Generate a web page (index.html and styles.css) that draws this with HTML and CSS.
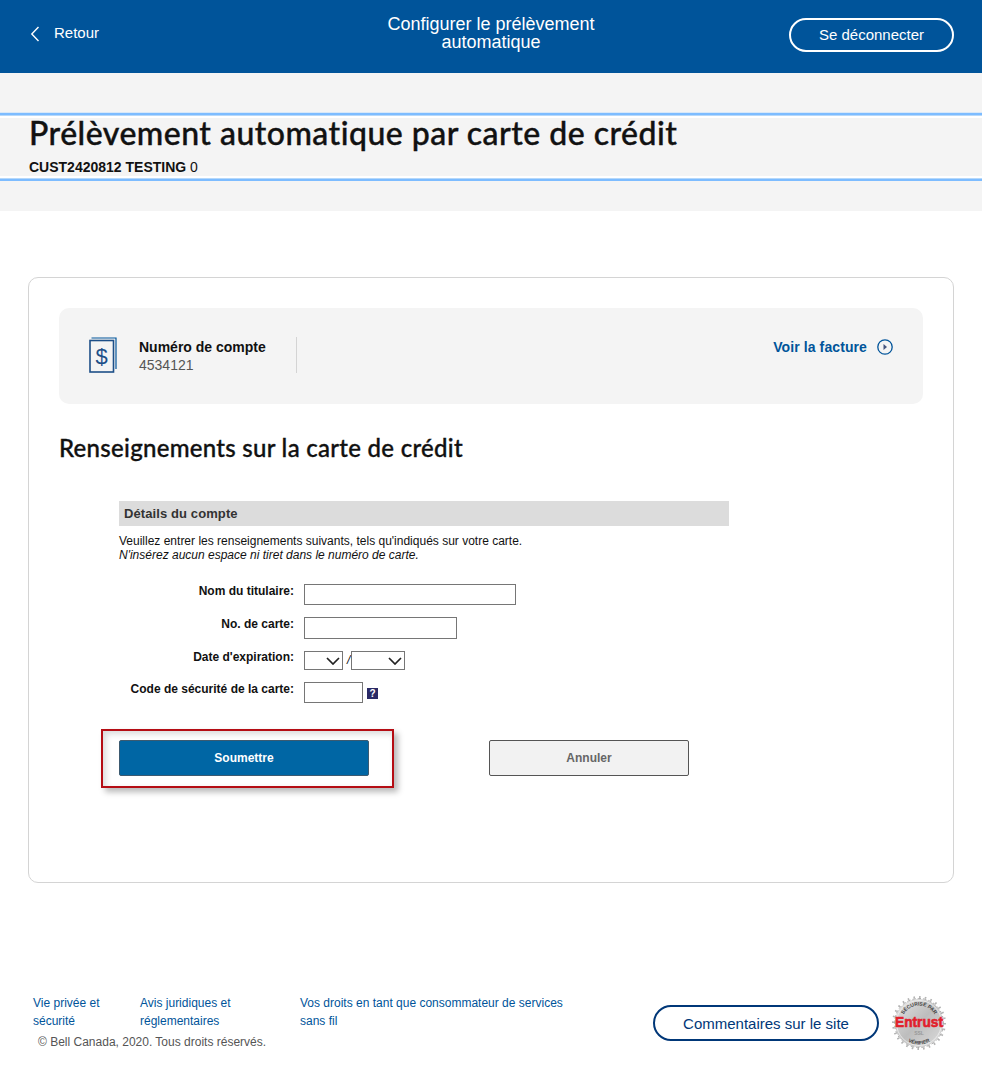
FILE: index.html
```html
<!DOCTYPE html>
<html lang="fr">
<head>
    <meta charset="UTF-8">
    <meta name="viewport" content="width=device-width, initial-scale=1.0">
    <title>Configurer le prélèvement automatique</title>
    <link rel="stylesheet" href="styles.css">
</head>
<body>
    <header class="topbar">
        <a class="back">
            <svg class="back-icon" width="10" height="16" viewBox="0 0 10 16"><path d="M8.5 1 L1.8 8 L8.5 15" fill="none" stroke="#fff" stroke-width="1.4"/></svg>
            Retour
        </a>
        <div class="topbar-title">Configurer le prélèvement<br>automatique</div>
        <button class="logout">Se déconnecter</button>
    </header>

    <div class="band">
        <div class="band-box">
            <h1>Prélèvement automatique par carte de crédit</h1>
            <div class="customer"><b>CUST2420812 TESTING</b> 0</div>
        </div>
    </div>

    <main class="card">
        <div class="account">
            <svg class="bill-icon" width="28" height="36" viewBox="0 0 28 36">
                <path d="M2.5 1 H27 V32" fill="none" stroke="#00549a" stroke-width="1.2"/>
                <rect x="1" y="3.5" width="23.5" height="31.5" fill="none" stroke="#1d4f88" stroke-width="1.6"/>
                <text x="12.7" y="27" class="bill-sign">$</text>
            </svg>
            <div class="account-info">
                <div class="account-label">Numéro de compte</div>
                <div class="account-number">4534121</div>
            </div>
            <a class="invoice">
                Voir la facture
                <svg width="16" height="16" viewBox="0 0 16 16"><circle cx="8" cy="8" r="7.2" fill="none" stroke="#00549a" stroke-width="1.3"/><path d="M6.5 5 L10 8 L6.5 11 Z" fill="#44557f"/></svg>
            </a>
        </div>

        <h2>Renseignements sur la carte de crédit</h2>

        <section class="form">
            <div class="form-head">Détails du compte</div>
            <p class="form-note">Veuillez entrer les renseignements suivants, tels qu'indiqués sur votre carte.<br><i>N'insérez aucun espace ni tiret dans le numéro de carte.</i></p>

            <div class="fields">
                <label>Nom du titulaire:</label>
                <div class="field"><input class="input-name" type="text"></div>
                <label>No. de carte:</label>
                <div class="field"><input class="input-card" type="text"></div>
                <label class="label-date">Date d'expiration:</label>
                <div class="field">
                    <select class="select-month"><option></option></select>
                    <span class="slash">/</span>
                    <select class="select-year"><option></option></select>
                </div>
                <label>Code de sécurité de la carte:</label>
                <div class="field">
                    <input class="input-code" type="text">
                    <span class="help">?</span>
                </div>
            </div>

            <div class="actions">
                <div class="submit-wrap"><button class="btn-submit">Soumettre</button></div>
                <button class="btn-cancel">Annuler</button>
            </div>
        </section>
    </main>

    <footer class="footer">
        <div class="footer-left">
            <div class="footer-links">
                <a class="link-privacy">Vie privée et sécurité</a>
                <a class="link-legal">Avis juridiques et réglementaires</a>
                <a class="link-rights">Vos droits en tant que consommateur de services sans fil</a>
            </div>
            <div class="copyright">© Bell Canada, 2020. Tous droits réservés.</div>
        </div>
        <div class="footer-right">
            <button class="feedback">Commentaires sur le site</button>
            <svg class="seal" width="54" height="54" viewBox="0 0 54 54">
                <defs>
                    <linearGradient id="silver" x1="0" y1="0" x2="1" y2="1">
                        <stop offset="0" stop-color="#e4e4e4"/>
                        <stop offset="0.5" stop-color="#bdbdbd"/>
                        <stop offset="1" stop-color="#dcdcdc"/>
                    </linearGradient>
                    <path id="seal-top" d="M9.5 27 A17.5 17.5 0 0 1 44.5 27"/>
                    <path id="seal-bottom" d="M5.5 27 A21.5 21.5 0 0 0 48.5 27"/>
                </defs>
                <circle cx="27" cy="27" r="24" fill="url(#silver)"/>
                <circle cx="27" cy="27" r="24.5" fill="none" stroke="#ababab" stroke-width="1" stroke-dasharray="3.4 2"/>
                <circle cx="27" cy="27" r="26" fill="none" stroke="#b4b4b4" stroke-width="2" stroke-dasharray="1.6 4.2"/>
                <circle cx="27" cy="27" r="22.5" fill="none" stroke="#f2f2f2" stroke-width="0.8"/>
                <text class="seal-small"><textPath href="#seal-top" startOffset="50%" text-anchor="middle">SÉCURISÉ PAR</textPath></text>
                <text class="seal-small"><textPath href="#seal-bottom" startOffset="50%" text-anchor="middle">VÉRIFIER</textPath></text>
                <text x="3" y="31" class="seal-name" textLength="48" lengthAdjust="spacingAndGlyphs">Entrust</text>
                <text x="27" y="39" class="seal-ssl">SSL</text>
            </svg>
        </div>
    </footer>
</body>
</html>
```

FILE: styles.css
```css
* {
    box-sizing: border-box;
}

body {
    margin: 0;
    font-family: "Liberation Sans", Arial, sans-serif;
    background: #fff;
    color: #111;
}

/* Top bar */
.topbar {
    height: 73px;
    background: #00549a;
    color: #fff;
    display: grid;
    grid-template-columns: 1fr auto 1fr;
    align-items: start;
    padding: 0 28px;
}

.back {
    display: flex;
    align-items: center;
    gap: 14px;
    font-size: 15px;
    padding: 24px 0 0 2px;
    line-height: 18px;
}

.back-icon {
    margin-top: 2px;
}

.topbar-title {
    font-size: 18px;
    line-height: 18px;
    text-align: center;
    padding-top: 15px;
}

.logout {
    justify-self: end;
    width: 165px;
    height: 34px;
    margin-top: 18px;
    padding: 0 0 2px;
    background: transparent;
    border: 2px solid #fff;
    border-radius: 17px;
    color: #fff;
    font: 15px "Liberation Sans", Arial, sans-serif;
}

/* Title band */
.band {
    height: 138px;
    background: #f4f4f4;
    padding-top: 40px;
}

.band-box {
    height: 68px;
    padding: 0 29px;
    border-top: 2px solid #7dbcff;
    border-bottom: 2px solid #7dbcff;
    box-shadow: 0 -1px 0 #d8e8f8, inset 0 1px 0 #b5d8fb, inset 0 -1px 0 #b5d8fb, inset 0 3px 0 #fff, inset 0 -3px 0 #fff;
}

h1 {
    margin: 0;
    padding-top: 2px;
    font: 500 32px/32px Lato, sans-serif;
    letter-spacing: 0.48px;
    -webkit-text-stroke: 0.4px #111;
    color: #111;
}

.customer {
    font-size: 14px;
    line-height: 16px;
    margin-top: 10px;
    color: #111;
}

/* Main card */
.card {
    margin: 66px 28px 0;
    height: 606px;
    border: 1px solid #d4d4d4;
    border-radius: 10px;
    padding: 30px 30px 0;
}

.account {
    height: 96px;
    background: #f4f4f4;
    border-radius: 10px;
    display: flex;
    align-items: flex-start;
    padding: 29px 30px 0;
}

.bill-sign {
    font: 22px "Liberation Sans", Arial, sans-serif;
    fill: #1d4f88;
    text-anchor: middle;
}

.account-info {
    margin-left: 22px;
    width: 158px;
    height: 36px;
    border-right: 1px solid #d4d4d4;
    padding-top: 1px;
}

.account-label {
    font-size: 14px;
    font-weight: bold;
    line-height: 18px;
}

.account-number {
    font-size: 14px;
    line-height: 18px;
    color: #555;
}

.invoice {
    margin-left: auto;
    display: flex;
    align-items: center;
    gap: 10px;
    font-size: 14px;
    font-weight: bold;
    letter-spacing: 0.1px;
    color: #00549a;
    line-height: 20px;
}

h2 {
    margin: 27px 0 0;
    font: 500 24px/34px Lato, sans-serif;
    letter-spacing: 0.28px;
    -webkit-text-stroke: 0.35px #111;
    color: #111;
}

/* Form */
.form {
    margin: 36px 0 0 60px;
    font-size: 12px;
}

.form-head {
    width: 610px;
    height: 25px;
    background: #dcdcdc;
    color: #333;
    font-size: 13px;
    font-weight: bold;
    letter-spacing: 0.1px;
    line-height: 25px;
    padding-left: 5px;
}

.form-note {
    margin: 8px 0 0;
    line-height: 14px;
    color: #111;
}

.fields {
    display: grid;
    grid-template-columns: 175px auto;
    column-gap: 10px;
    margin-top: 22px;
    width: 610px;
}

.fields label {
    font-weight: bold;
    text-align: right;
    line-height: 14px;
    color: #111;
}

.fields .label-date {
    margin-top: -1px;
}

.field {
    display: flex;
    align-items: flex-start;
    margin-bottom: 12px;
}

.fields input {
    display: block;
    height: 21px;
    border: 1px solid #767676;
    background: #fff;
    padding: 0 3px;
}

/* native arrow is too small, draw a wider chevron */
.fields select {
    display: block;
    height: 19px;
    border: 1px solid #767676;
    border-radius: 0;
    appearance: none;
    background: #fff url("data:image/svg+xml,%3Csvg xmlns='http://www.w3.org/2000/svg' width='14' height='8'%3E%3Cpath d='M1 1 L7 7 L13 1' fill='none' stroke='%23222' stroke-width='1.7'/%3E%3C/svg%3E") no-repeat right 2px center;
}

.field:nth-child(4) input {
    height: 22px;
}

.field:nth-child(8) {
    margin-bottom: 0;
}

.input-name {
    width: 212px;
}

.input-card {
    width: 153px;
}

.input-code {
    width: 59px;
}

.select-month {
    width: 39px;
}

.select-year {
    width: 54px;
}

.slash {
    width: 8px;
    padding-left: 4px;
    line-height: 18px;
    font-style: italic;
}

.help {
    width: 11px;
    height: 11px;
    margin: 6px 0 0 4px;
    background: #2a2a66;
    color: #fff;
    font-size: 10px;
    font-weight: bold;
    line-height: 11px;
    text-align: center;
}

.actions {
    display: flex;
    align-items: flex-start;
    margin-top: 26px;
    margin-left: -18px;
}

.submit-wrap {
    width: 293px;
    height: 59px;
    border: 2px solid #b50d14;
    box-shadow: 4px 4px 6px rgba(0, 0, 0, 0.28), inset 3px 3px 6px rgba(0, 0, 0, 0.15);
    padding: 9px 16px;
}

.btn-submit {
    display: block;
    width: 250px;
    height: 36px;
    background: #0066a4;
    border: 1px solid #3c5a70;
    border-radius: 2px;
    color: #fff;
    font: bold 12px "Liberation Sans", Arial, sans-serif;
}

.btn-cancel {
    width: 200px;
    height: 36px;
    margin: 11px 0 0 95px;
    background: #f2f2f2;
    border: 1px solid #555;
    border-radius: 2px;
    color: #666;
    font: bold 12px "Liberation Sans", Arial, sans-serif;
}

/* Footer */
.footer {
    display: flex;
    justify-content: space-between;
    margin: 111px 28px 0 33px;
    height: 74px;
}

.footer-links {
    display: flex;
    font-size: 12px;
    line-height: 18px;
    color: #00549a;
}

.link-privacy {
    width: 107px;
    padding-right: 30px;
}

.link-legal {
    width: 160px;
    padding-right: 40px;
}

.link-rights {
    width: 280px;
}

.copyright {
    font-size: 12px;
    line-height: 14px;
    margin: 5px 0 0 5px;
    color: #555;
}

.footer-right {
    display: flex;
    align-items: flex-start;
    margin-top: 2px;
}

.feedback {
    width: 226px;
    height: 36px;
    margin-top: 9px;
    background: #fff;
    border: 2px solid #003778;
    border-radius: 18px;
    color: #003778;
    font: 15px "Liberation Sans", Arial, sans-serif;
}

.seal {
    margin: 0 8px 0 13px;
}

.seal-small {
    font: bold 5px "Liberation Sans", Arial, sans-serif;
    fill: #444;
}

.seal-name {
    font: bold 15px "Liberation Sans", Arial, sans-serif;
    fill: #e2202c;
    stroke: #e2202c;
    stroke-width: 0.6;
}

.seal-ssl {
    font: bold 5px "Liberation Sans", Arial, sans-serif;
    fill: #999;
    text-anchor: middle;
}
```
